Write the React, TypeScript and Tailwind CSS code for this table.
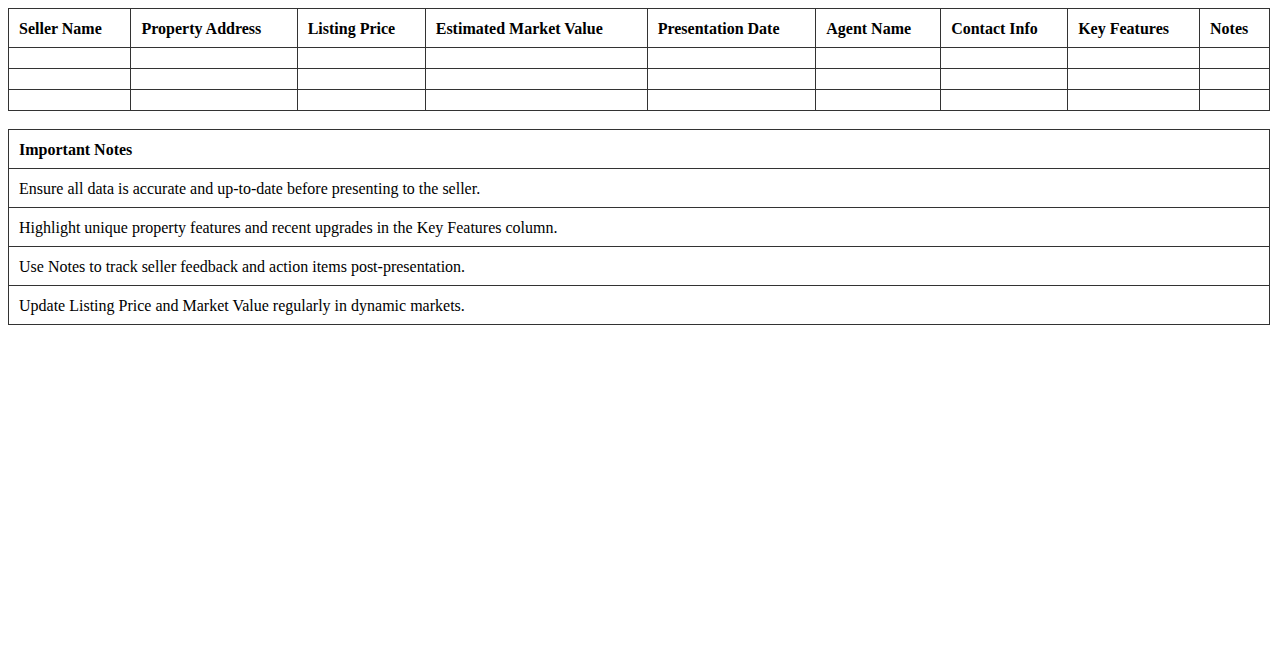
const columns = [
  'Seller Name',
  'Property Address',
  'Listing Price',
  'Estimated Market Value',
  'Presentation Date',
  'Agent Name',
  'Contact Info',
  'Key Features',
  'Notes',
]

const notes = [
  'Ensure all data is accurate and up-to-date before presenting to the seller.',
  'Highlight unique property features and recent upgrades in the Key Features column.',
  'Use Notes to track seller feedback and action items post-presentation.',
  'Update Listing Price and Market Value regularly in dynamic markets.',
]

export default function App() {
  return (
    <div className="p-2 bg-white text-black text-base font-['Liberation_Serif','Times_New_Roman',serif]">
      {/* Listing table */}
      <table className="w-full border-collapse">
        <thead>
          <tr>
            {columns.map((col) => (
              <th key={col} className="border border-[#333] px-[10px] pt-[11px] pb-[9px] text-left font-bold leading-[18px]">
                {col}
              </th>
            ))}
          </tr>
        </thead>
        <tbody>
          {[...Array(3)].map((_, i) => (
            <tr key={i}>
              {columns.map((col) => (
                <td key={col} className="border border-[#333] p-[10px]"></td>
              ))}
            </tr>
          ))}
        </tbody>
      </table>

      {/* Notes table */}
      <table className="w-full border-collapse mt-[18px]">
        <thead>
          <tr>
            <th className="border border-[#333] px-[10px] pt-[11px] pb-[9px] text-left font-bold leading-[18px]">Important Notes</th>
          </tr>
        </thead>
        <tbody>
          {notes.map((note) => (
            <tr key={note}>
              <td className="border border-[#333] px-[10px] pt-[11px] pb-[9px] leading-[18px]">{note}</td>
            </tr>
          ))}
        </tbody>
      </table>
    </div>
  )
}
